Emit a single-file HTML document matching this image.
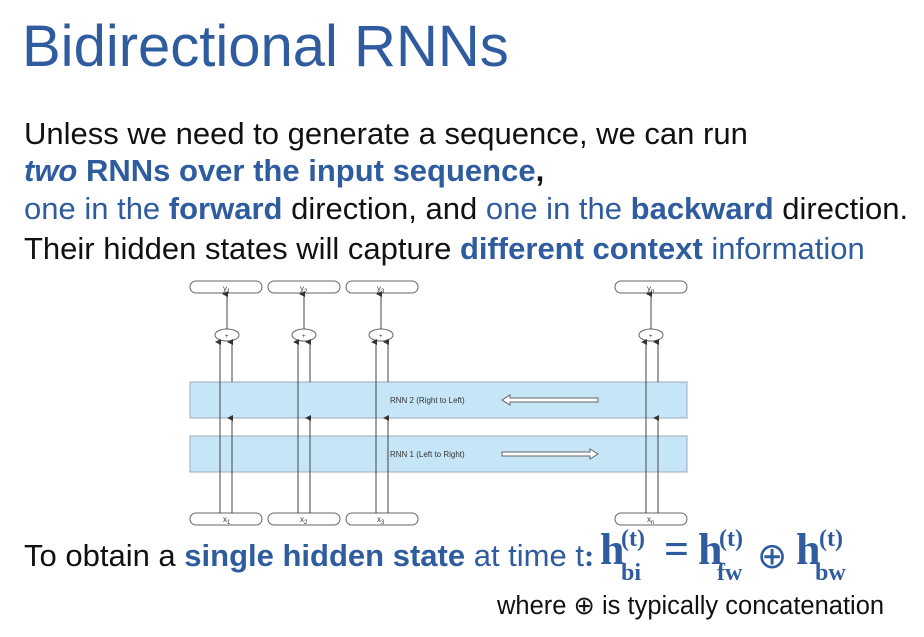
<!DOCTYPE html>
<html><head><style>
body{margin:0;width:924px;height:637px;background:#fff;overflow:hidden;position:relative;font-family:"Liberation Sans",sans-serif;color:#111}
.t{position:absolute;white-space:nowrap;line-height:1}
.b{color:#2f5c9e}
.bb{color:#2f5c9e;font-weight:bold}
.m{font-family:"Liberation Serif",serif;font-weight:bold;color:#2f5c9e}
</style></head><body>
<div class="t b" style="left:22px;top:18px;font-size:58px">Bidirectional RNNs</div>
<div class="t" style="left:24px;top:118px;font-size:31px">Unless we need to generate a sequence, we can run</div>
<div class="t" style="left:24px;top:155px;font-size:31px"><span class="bb"><i>two</i> RNNs over the input sequence</span><b>,</b></div>
<div class="t b" style="left:24px;top:193px;font-size:31px">one in the <b>forward</b> <span style="color:#111">direction, and</span> one in the <b>backward</b> <span style="color:#111">direction.</span></div>
<div class="t" style="left:24px;top:233px;font-size:31px">Their hidden states will capture <span class="bb">different context</span> <span class="b">information</span></div>
<svg style="position:absolute;left:0;top:0" width="924" height="637">
<defs><marker id="a" markerWidth="6" markerHeight="6" refX="3" refY="5" orient="auto-start-reverse"><path d="M0,6 L3,0 L6,6z" fill="#333"/></marker></defs>
<g fill="#fff" stroke="#666" stroke-width="1">
<rect x="190" y="281" width="72" height="12" rx="6"/><rect x="268" y="281" width="72" height="12" rx="6"/><rect x="346" y="281" width="72" height="12" rx="6"/><rect x="615" y="281" width="72" height="12" rx="6"/>
<rect x="190" y="513" width="72" height="12" rx="6"/><rect x="268" y="513" width="72" height="12" rx="6"/><rect x="346" y="513" width="72" height="12" rx="6"/><rect x="615" y="513" width="72" height="12" rx="6"/>
<ellipse cx="227" cy="335" rx="12" ry="6"/><ellipse cx="304" cy="335" rx="12" ry="6"/><ellipse cx="381" cy="335" rx="12" ry="6"/><ellipse cx="651" cy="335" rx="12" ry="6"/>
</g>
<g fill="#c6e6f8" stroke="#9ab" stroke-width="1">
<rect x="190" y="382" width="497" height="36"/><rect x="190" y="436" width="497" height="36"/>
</g>
<g stroke="#444" stroke-width="1" fill="none">
<path d="M220 513V342" marker-end="url(#a)"/>
<path d="M232 513V418" marker-end="url(#a)"/><path d="M232 382V342" marker-end="url(#a)"/>
<path d="M298 513V342" marker-end="url(#a)"/><path d="M310 513V418" marker-end="url(#a)"/><path d="M310 382V342" marker-end="url(#a)"/>
<path d="M376 513V342" marker-end="url(#a)"/><path d="M388 513V418" marker-end="url(#a)"/><path d="M388 382V342" marker-end="url(#a)"/>
<path d="M646 513V342" marker-end="url(#a)"/><path d="M658 513V418" marker-end="url(#a)"/><path d="M658 382V342" marker-end="url(#a)"/>
<path d="M227 329V294" marker-end="url(#a)"/><path d="M304 329V294" marker-end="url(#a)"/><path d="M381 329V294" marker-end="url(#a)"/><path d="M651 329V294" marker-end="url(#a)"/>
</g>
<g stroke="#666" fill="#fff"><path d="M502 400l8-5v3h88v4h-88v3z"/><path d="M598 454l-8-5v3h-88v4h88v3z"/></g>
<g font-family="Liberation Sans" font-size="8" fill="#333">
<text x="390" y="403">RNN 2 (Right to Left)</text><text x="390" y="457">RNN 1 (Left to Right)</text>
<text x="223" y="291">y<tspan font-size="6" dy="2">1</tspan></text><text x="300" y="291">y<tspan font-size="6" dy="2">2</tspan></text><text x="377" y="291">y<tspan font-size="6" dy="2">3</tspan></text><text x="647" y="291">y<tspan font-size="6" dy="2">n</tspan></text>
<text x="223" y="522">x<tspan font-size="6" dy="2">1</tspan></text><text x="300" y="522">x<tspan font-size="6" dy="2">2</tspan></text><text x="377" y="522">x<tspan font-size="6" dy="2">3</tspan></text><text x="647" y="522">x<tspan font-size="6" dy="2">n</tspan></text>
<text x="225" y="338" font-size="6">+</text><text x="302" y="338" font-size="6">+</text><text x="379" y="338" font-size="6">+</text><text x="649" y="338" font-size="6">+</text>
</g>
</svg>
<div class="t" style="left:24px;top:540px;font-size:31px">To obtain a <span class="bb">single hidden state</span> <span class="b">at time t</span><span class="m">:</span></div>
<div class="t m" style="left:600px;top:528px;font-size:44px">h</div><div class="t m" style="left:621px;top:527px;font-size:24px">(t)</div><div class="t m" style="left:621px;top:561px;font-size:24px">bi</div>
<div class="t m" style="left:664px;top:528px;font-size:44px">=</div>
<div class="t m" style="left:698px;top:528px;font-size:44px">h</div><div class="t m" style="left:719px;top:527px;font-size:24px">(t)</div><div class="t m" style="left:717px;top:561px;font-size:24px">fw</div>
<div class="t" style="left:757px;top:538px;font-size:36px;color:#2f5c9e">⊕</div>
<div class="t m" style="left:796px;top:528px;font-size:44px">h</div><div class="t m" style="left:819px;top:527px;font-size:24px">(t)</div><div class="t m" style="left:815px;top:561px;font-size:24px">bw</div>
<div class="t" style="left:497px;top:594px;font-size:25.5px">where ⊕ is typically concatenation</div>
</body></html>
